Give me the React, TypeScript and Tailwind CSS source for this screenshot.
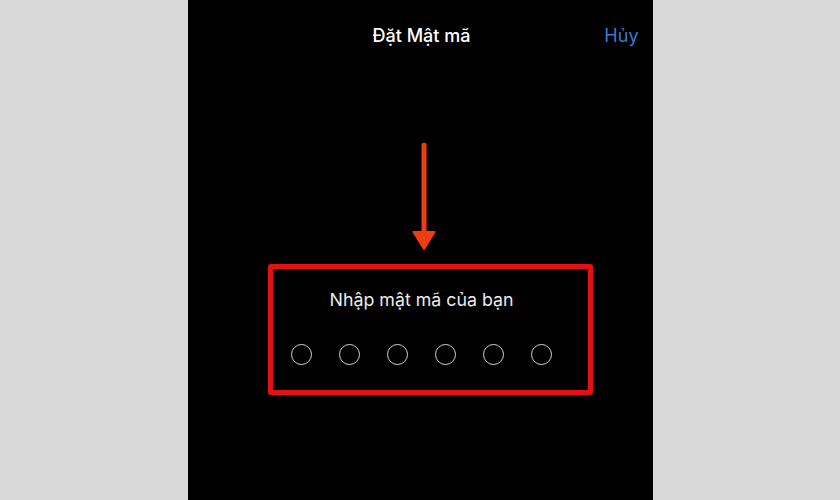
import React from "react";

export default function App() {
  const font = { fontFamily: 'Inter, "Noto Sans", "Liberation Sans", sans-serif' };
  return (
    <div className="w-[840px] h-[500px] bg-[#d8d8d8] flex justify-center" style={font}>
      <div className="w-[465px] h-[500px] bg-black flex flex-col items-start">
        <div className="w-full h-[72px] grid grid-cols-[1fr_auto_1fr] items-center">
          <div />
          <div className="text-white text-[18px] font-medium leading-none pl-[3px]">Đặt Mật mã</div>
          <div className="flex justify-end pr-[14px] text-[#3a7ad8] text-[18px] leading-none">Hủy</div>
        </div>
        <svg className="ml-[224px] mt-[71px]" width="24" height="107" viewBox="0 0 24 107">
          <line x1="12" y1="2" x2="12" y2="92" stroke="#f03c12" strokeWidth="5" strokeLinecap="round" />
          <path d="M1.5 89 L22.5 89 L12 106 Z" fill="#f03c12" stroke="#f03c12" strokeWidth="2" strokeLinejoin="round" />
        </svg>
        <div className="ml-[80px] mt-[14px] w-[325px] h-[131px] border-[5px] border-[#e21212] rounded-[3px] flex flex-col items-center pr-[17px]">
          <div className="mt-[21px] text-[#ececec] text-[17.8px] leading-[20px]">Nhập mật mã của bạn</div>
          <div className="mt-[34px] flex gap-[27px]">
            {[0, 1, 2, 3, 4, 5].map((i) => (
              <div key={i} className="w-[21px] h-[21px] rounded-full border-[1.6px] border-[#d4d4d4]" />
            ))}
          </div>
        </div>
      </div>
    </div>
  );
}
